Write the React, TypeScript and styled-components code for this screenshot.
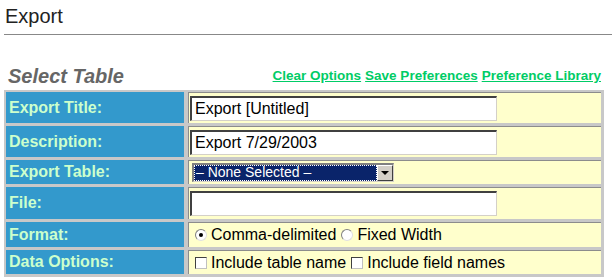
import styled, { createGlobalStyle } from 'styled-components';

const Global = createGlobalStyle`
  body {
    margin: 0;
    background: #ffffff;
    font-family: 'Liberation Sans', Arial, sans-serif;
  }
`;

const Page = styled.div`
  width: 612px;
  height: 280px;
  overflow: hidden;
`;

const Title = styled.h1`
  margin: 0 0 0 4px;
  padding: 5px 0 0 1px;
  height: 35px;
  box-sizing: border-box;
  font-size: 20px;
  line-height: 23px;
  font-weight: normal;
  color: #222;
  border-bottom: 1px solid #888;
`;

const SectionBar = styled.div`
  display: flex;
  justify-content: space-between;
  align-items: flex-end;
  margin: 28px 11px 0 8px;
  height: 24px;
`;

const SectionTitle = styled.h2`
  margin: 0;
  font-size: 20px;
  line-height: 21px;
  font-style: italic;
  font-weight: bold;
  color: #666;
`;

const Links = styled.div`
  display: flex;
  gap: 4px;
  padding-bottom: 4px;
`;

const Link = styled.a`
  font-size: 13.5px;
  line-height: 15px;
  font-weight: bold;
  color: #00cc66;
  text-decoration: underline;
`;

const Grid = styled.div`
  margin: 3px 0 0 4px;
  width: 600px;
  box-sizing: border-box;
  display: grid;
  grid-template-columns: 178px 1fr;
  gap: 3px 4px;
  padding: 2px 3px 3px 2px;
  background: #c8c8c8;
`;

const Label = styled.div<{ $h: number }>`
  height: ${(p) => p.$h}px;
  background: #3399cc;
  color: #ccffcc;
  font-size: 16px;
  font-weight: bold;
  display: flex;
  align-items: center;
  padding-left: 3px;
  box-sizing: border-box;
`;

const Value = styled.div<{ $h: number }>`
  height: ${(p) => p.$h}px;
  background: #ffffcc;
  border-top: 1px solid #8c8c8c;
  border-left: 1px solid #8c8c8c;
  display: flex;
  align-items: center;
  padding-left: 1px;
  box-sizing: border-box;
  font-size: 16px;
  color: #000;
`;

const TextBox = styled.div`
  width: 307px;
  height: 25px;
  box-sizing: border-box;
  background: #fff;
  border-top: 2px solid #404040;
  border-left: 2px solid #404040;
  border-right: 1px solid #d4d0c8;
  border-bottom: 1px solid #d4d0c8;
  font-size: 16px;
  padding: 1px 0 0 3px;
  display: flex;
  align-items: center;
  white-space: nowrap;
`;

const Select = styled.div`
  margin-left: 2px;
  width: 202px;
  height: 19px;
  box-sizing: border-box;
  border-top: 2px solid #808080;
  border-left: 2px solid #808080;
  border-right: 1px solid #d4d0c8;
  border-bottom: 1px solid #d4d0c8;
  background: #fff;
  display: flex;
`;

const Selected = styled.div`
  flex: 1;
  background: #0a246a;
  color: #fff;
  font-size: 14px;
  line-height: 15px;
  padding-left: 2px;
  outline: 1px dotted #ffffff;
  outline-offset: -1px;
  white-space: nowrap;
  overflow: hidden;
`;

const Arrow = styled.div`
  width: 16px;
  background: #d4d0c8;
  border-left: 1px solid #fff;
  border-top: 1px solid #fff;
  border-right: 1px solid #404040;
  border-bottom: 1px solid #404040;
  box-sizing: border-box;
  display: flex;
  align-items: center;
  justify-content: center;
  &::after {
    content: '';
    border-left: 4px solid transparent;
    border-right: 4px solid transparent;
    border-top: 4px solid #000;
  }
`;

const Choice = styled.label`
  display: inline-flex;
  align-items: center;
  gap: 4px;
  margin-left: 5px;
  font-size: 16px;
  color: #000;
  white-space: nowrap;
`;

const Radio = styled.span<{ $on?: boolean }>`
  width: 12px;
  height: 12px;
  border-radius: 50%;
  box-sizing: border-box;
  border: 1px solid #808080;
  border-bottom-color: #e0e0e0;
  border-right-color: #e0e0e0;
  background: #fff;
  display: inline-flex;
  align-items: center;
  justify-content: center;
  &::after {
    content: '';
    width: 4px;
    height: 4px;
    border-radius: 50%;
    background: ${(p) => (p.$on ? '#000' : 'transparent')};
  }
`;

const Check = styled.span`
  width: 12px;
  height: 12px;
  box-sizing: border-box;
  border: 1px solid #404040;
  border-bottom-color: #c0c0c0;
  border-right-color: #c0c0c0;
  background: #fff;
`;

export default function App() {
  return (
    <Page>
      <Global />
      <Title>Export</Title>
      <SectionBar>
        <SectionTitle>Select Table</SectionTitle>
        <Links>
          <Link>Clear Options</Link>
          <Link>Save Preferences</Link>
          <Link>Preference Library</Link>
        </Links>
      </SectionBar>
      <Grid>
        <Label $h={31}>Export Title:</Label>
        <Value $h={31}>
          <TextBox>Export [Untitled]</TextBox>
        </Value>
        <Label $h={31}>Description:</Label>
        <Value $h={31}>
          <TextBox>Export 7/29/2003</TextBox>
        </Value>
        <Label $h={24}>Export Table:</Label>
        <Value $h={24}>
          <Select>
            <Selected>– None Selected –</Selected>
            <Arrow />
          </Select>
        </Value>
        <Label $h={32}>File:</Label>
        <Value $h={32}>
          <TextBox />
        </Value>
        <Label $h={25}>Format:</Label>
        <Value $h={25}>
          <Choice>
            <Radio $on />
            Comma-delimited
          </Choice>
          <Choice>
            <Radio />
            Fixed Width
          </Choice>
        </Value>
        <Label $h={24}>Data Options:</Label>
        <Value $h={24}>
          <Choice>
            <Check />
            Include table name
          </Choice>
          <Choice>
            <Check />
            Include field names
          </Choice>
        </Value>
      </Grid>
    </Page>
  );
}
